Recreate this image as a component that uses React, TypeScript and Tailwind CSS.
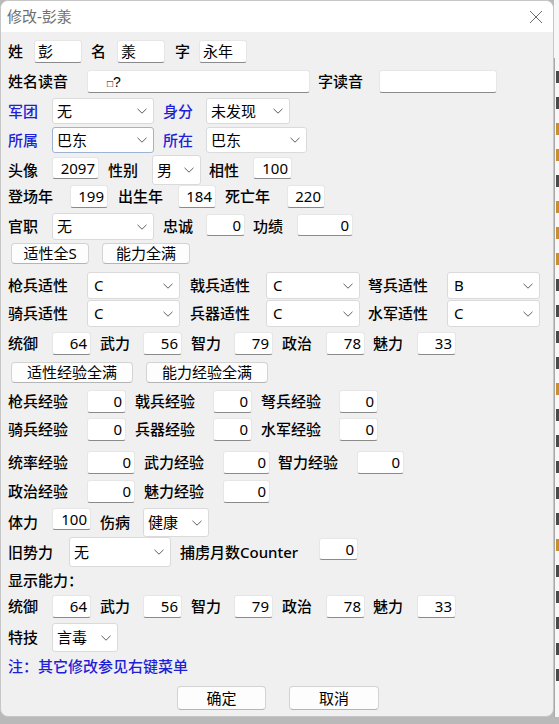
import React from "react";

const font = "font-['Noto_Sans','Noto_Sans_CJK_SC',sans-serif]";

function L({ children, className = "", blue = false }: { children: React.ReactNode; className?: string; blue?: boolean }) {
  return (
    <span
      className={`shrink-0 whitespace-nowrap text-[15px] leading-none font-medium ${blue ? "text-[#1f1fd6]" : "text-black"} ${className}`}
    >
      {children}
    </span>
  );
}

function I({ v = "", className = "", right = false }: { v?: React.ReactNode; className?: string; right?: boolean }) {
  return (
    <div
      className={`shrink-0 h-[23px] bg-white border border-[#e6e6e6] border-b-[#8a8a8a] rounded-[3px] flex items-center text-[15px] leading-none text-black ${right ? "justify-end pr-[3px]" : "pl-[3px]"} ${className}`}
    >
      {v}
    </div>
  );
}

function Chevron() {
  return (
    <svg width="10" height="6" viewBox="0 0 10 6" className="shrink-0">
      <polyline points="0.5,0.8 5,5.2 9.5,0.8" fill="none" stroke="#5f5f5f" strokeWidth="1" />
    </svg>
  );
}

function S({ v, className = "", focus = false, pad = "pl-[4px]" }: { v: string; className?: string; focus?: boolean; pad?: string }) {
  return (
    <div
      className={`shrink-0 h-[27px] bg-white border ${focus ? "border-[#9db3d3]" : "border-[#dadada]"} rounded-[3px] flex items-center justify-between ${pad} pr-[6px] text-[15px] leading-none text-black ${className}`}
    >
      <span>{v}</span>
      <Chevron />
    </div>
  );
}

function B({ children, className = "" }: { children: React.ReactNode; className?: string }) {
  return (
    <div
      className={`shrink-0 h-[21px] bg-[#fdfdfd] border border-[#d3d3d3] border-b-[#b5b5b5] rounded-[4px] flex items-center justify-center text-[15px] leading-none text-black ${className}`}
    >
      {children}
    </div>
  );
}

const behind = ["d", "d", "o", "o", "d", "o", "o", "o", "d", "d", "d", "d", "o", "d", "d", "d", "d", "d", "o", "d", "d", "d", "d", "d"];

export default function App() {
  return (
    <div className={`w-[559px] h-[724px] bg-[#b9b9b9] overflow-hidden ${font}`}>
      <div className="flex h-[717px]">
        {/* dialog */}
        <div className="w-[554px] h-[717px] shrink-0 bg-[#f0f0f0] border border-[#c6c6c6] rounded-lg overflow-hidden flex flex-col">
          <div className="h-[31px] bg-white flex items-center justify-between pl-[6px] pr-[10px]">
            <span className="text-[15px] text-[#6f6f6f] leading-none">修改-彭羕</span>
            <svg width="14" height="14" viewBox="0 0 14 14">
              <path d="M1 1 L13 13 M13 1 L1 13" stroke="#5a5a5a" strokeWidth="0.9" fill="none" />
            </svg>
          </div>

          <div className="pl-[7px] flex flex-col">
            {/* 姓 名 字 */}
            <div className="flex items-center h-[23px] mt-[8px]">
              <L className="w-[26px]">姓</L>
              <I v="彭" className="w-[48px]" />
              <L className="w-[35px] pl-[9px]">名</L>
              <I v="羕" className="w-[48px]" />
              <L className="w-[34px] pl-[10px]">字</L>
              <I v="永年" className="w-[48px]" />
            </div>

            <div className="flex items-center h-[23px] mt-[7px]">
              <L className="w-[79px]">姓名读音</L>
              <I
                v={
                  <span className="font-['Liberation_Sans',sans-serif] text-[14px]">
                    <span className="text-[10px]">□</span>?
                  </span>
                }
                className="w-[223px] !pl-[19px]"
              />
              <L className="w-[69px] pl-[8px]">字读音</L>
              <I className="w-[118px]" />
            </div>

            <div className="flex items-center h-[26px] mt-[5px]">
              <L blue className="w-[44px]">军团</L>
              <S v="无" className="w-[102px] !h-[26px]" />
              <L blue className="w-[52px] pl-[9px]">身分</L>
              <S v="未发现" className="w-[84px] !h-[26px]" />
            </div>

            <div className="flex items-center h-[26px] mt-[3px]">
              <L blue className="w-[44px]">所属</L>
              <S v="巴东" focus className="w-[102px] !h-[26px]" />
              <L blue className="w-[52px] pl-[9px]">所在</L>
              <S v="巴东" className="w-[101px] !h-[26px]" />
            </div>

            <div className="flex items-center h-[30px] mt-[2px]">
              <L className="w-[44px]">头像</L>
              <I v="2097" right className="w-[47px] !h-[22px] self-start mt-[2px]" />
              <L className="w-[53px] pl-[9px]">性别</L>
              <S v="男" className="w-[49px] !h-[30px]" />
              <L className="w-[52px] pl-[8px]">相性</L>
              <I v="100" right className="w-[39px] !h-[22px] self-start mt-[2px]" />
            </div>

            <div className="flex items-center h-[23px]">
              <L className="w-[62px]">登场年</L>
              <I v="199" right className="w-[38px]" />
              <L className="w-[70px] pl-[10px]">出生年</L>
              <I v="184" right className="w-[38px]" />
              <L className="w-[71px] pl-[9px]">死亡年</L>
              <I v="220" right className="w-[38px]" />
            </div>

            <div className="flex items-center h-[27px] mt-[5px]">
              <L className="w-[44px]">官职</L>
              <S v="无" className="w-[102px]" />
              <L className="w-[52px] pl-[9px]">忠诚</L>
              <I v="0" right className="w-[39px] !h-[22px] self-start mt-[1px]" />
              <L className="w-[52px] pl-[8px]">功绩</L>
              <I v="0" right className="w-[56px] !h-[22px] self-start mt-[1px]" />
            </div>

            <div className="flex items-center h-[21px] mt-[3px]">
              <B className="w-[78px] ml-[3px]">适性全S</B>
              <B className="w-[88px] ml-[13px]">能力全满</B>
            </div>

            <div className="flex items-center h-[27px] mt-[8px]">
              <L className="w-[79px]">枪兵适性</L>
              <S v="C" pad="pl-[6px]" className="w-[93px]" />
              <L className="w-[86px] pl-[10px]">戟兵适性</L>
              <S v="C" pad="pl-[6px]" className="w-[94px]" />
              <L className="w-[87px] pl-[8px]">弩兵适性</L>
              <S v="B" pad="pl-[6px]" className="w-[93px]" />
            </div>

            <div className="flex items-center h-[27px] mt-[1px]">
              <L className="w-[79px]">骑兵适性</L>
              <S v="C" pad="pl-[6px]" className="w-[93px]" />
              <L className="w-[86px] pl-[10px]">兵器适性</L>
              <S v="C" pad="pl-[6px]" className="w-[94px]" />
              <L className="w-[87px] pl-[8px]">水军适性</L>
              <S v="C" pad="pl-[6px]" className="w-[93px]" />
            </div>

            <div className="flex items-center h-[23px] mt-[5px]">
              <L className="w-[44px]">统御</L>
              <I v="64" right className="w-[39px]" />
              <L className="w-[52px] pl-[9px]">武力</L>
              <I v="56" right className="w-[39px]" />
              <L className="w-[52px] pl-[9px]">智力</L>
              <I v="79" right className="w-[39px]" />
              <L className="w-[53px] pl-[9px]">政治</L>
              <I v="78" right className="w-[39px]" />
              <L className="w-[52px] pl-[8px]">魅力</L>
              <I v="33" right className="w-[39px]" />
            </div>

            <div className="flex items-center h-[21px] mt-[7px]">
              <B className="w-[122px] ml-[3px]">适性经验全满</B>
              <B className="w-[122px] ml-[13px]">能力经验全满</B>
            </div>

            <div className="flex items-center h-[23px] mt-[7px]">
              <L className="w-[79px]">枪兵经验</L>
              <I v="0" right className="w-[39px]" />
              <L className="w-[87px] pl-[9px]">戟兵经验</L>
              <I v="0" right className="w-[39px]" />
              <L className="w-[87px] pl-[9px]">弩兵经验</L>
              <I v="0" right className="w-[39px]" />
            </div>

            <div className="flex items-center h-[23px] mt-[5px]">
              <L className="w-[79px]">骑兵经验</L>
              <I v="0" right className="w-[39px]" />
              <L className="w-[87px] pl-[9px]">兵器经验</L>
              <I v="0" right className="w-[39px]" />
              <L className="w-[87px] pl-[9px]">水军经验</L>
              <I v="0" right className="w-[39px]" />
            </div>

            <div className="flex items-center h-[23px] mt-[10px]">
              <L className="w-[79px]">统率经验</L>
              <I v="0" right className="w-[48px]" />
              <L className="w-[88px] pl-[9px]">武力经验</L>
              <I v="0" right className="w-[47px]" />
              <L className="w-[87px] pl-[8px]">智力经验</L>
              <I v="0" right className="w-[47px]" />
            </div>

            <div className="flex items-center h-[23px] mt-[6px]">
              <L className="w-[79px]">政治经验</L>
              <I v="0" right className="w-[48px]" />
              <L className="w-[88px] pl-[9px]">魅力经验</L>
              <I v="0" right className="w-[47px]" />
            </div>

            <div className="flex items-center h-[29px] mt-[5px]">
              <L className="w-[44px]">体力</L>
              <I v="100" right className="w-[39px] !h-[22px] self-start" />
              <L className="w-[52px] pl-[9px]">伤病</L>
              <S v="健康" className="w-[66px] !h-[29px]" />
            </div>

            <div className="flex items-center h-[30px]">
              <L className="w-[61px]">旧势力</L>
              <S v="无" className="w-[102px] !h-[30px]" />
              <L className="w-[148px] pl-[9px]">捕虏月数Counter</L>
              <I v="0" right className="w-[39px] !h-[22px] self-start mt-[1px]" />
            </div>

            <div className="flex items-center h-[18px] mt-[4px]">
              <L>显示能力：</L>
            </div>

            <div className="flex items-center h-[23px] mt-[6px]">
              <L className="w-[44px]">统御</L>
              <I v="64" right className="w-[39px]" />
              <L className="w-[52px] pl-[9px]">武力</L>
              <I v="56" right className="w-[39px]" />
              <L className="w-[52px] pl-[9px]">智力</L>
              <I v="79" right className="w-[39px]" />
              <L className="w-[53px] pl-[9px]">政治</L>
              <I v="78" right className="w-[39px]" />
              <L className="w-[52px] pl-[8px]">魅力</L>
              <I v="33" right className="w-[39px]" />
            </div>

            <div className="flex items-center h-[29px] mt-[5px]">
              <L className="w-[44px]">特技</L>
              <S v="言毒" className="w-[66px] !h-[29px]" />
            </div>

            <div className="flex items-center h-[18px] mt-[5px]">
              <L blue>注：其它修改参见右键菜单</L>
            </div>

            <div className="flex items-center h-[24px] mt-[11px]">
              <B className="w-[89px] !h-[24px] ml-[169px]">确定</B>
              <B className="w-[90px] !h-[24px] ml-[23px]">取消</B>
            </div>
          </div>
        </div>

        {/* window behind the dialog */}
        <div className="flex-1 h-[717px] bg-[#f7f7f7] pt-[58px]">
          <div className="h-full border-l border-[#a8a8a8] flex flex-col items-start pt-[13px] gap-[14px]">
            {behind.map((c, i) => (
              <div key={i} className={`w-[3px] h-[12px] ml-[1px] ${c === "o" ? "bg-[#c98f2e]" : "bg-[#4a4a4a]"}`} />
            ))}
          </div>
        </div>
      </div>
    </div>
  );
}
